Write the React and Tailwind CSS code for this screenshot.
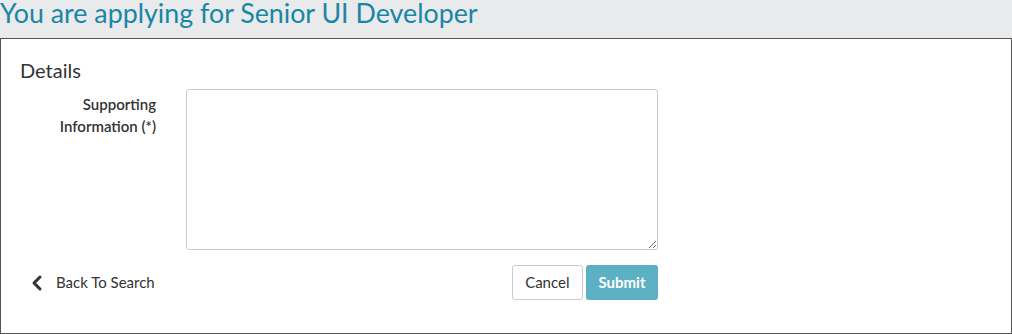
import { ChevronLeft } from 'lucide-react';

const App = () => {
    return (
        <div className="w-[1012px] h-[334px] bg-[#e9eaeb] font-['Lato','Liberation_Sans',sans-serif] text-[#333]">
            {/* Page title */}
            <div className="h-[38px]">
                <h1 className="text-[26.8px] leading-[26px] text-[#1a86a6]">You are applying for Senior UI Developer</h1>
            </div>

            {/* Form panel */}
            <div className="w-[1012px] h-[296px] bg-white border border-[#555] pt-[19px] px-[19px]">
                <h2 className="text-[20px] leading-[24px] text-[#333]">Details</h2>

                <div className="flex mt-[7px]">
                    <label className="w-[136px] text-right text-[15px] leading-[22px] font-semibold text-[#333] pt-[4px]">
                        Supporting<br />Information (*)
                    </label>
                    <textarea className="ml-[30px] w-[472px] h-[161px] border border-[#ccc] rounded-[3px] outline-none resize-y" />
                </div>

                <div className="flex items-center mt-[15px] w-[638px]">
                    <a href="#" className="flex items-center text-[15px] text-[#333] ml-[5px]">
                        <ChevronLeft className="w-[24px] h-[24px]" strokeWidth={3} />
                        <span className="ml-[7px]">Back To Search</span>
                    </a>
                    <div className="ml-auto flex gap-[3px]">
                        <button className="h-[35px] px-[12.5px] border border-[#ccc] rounded-[3px] bg-white text-[15px] text-[#333]">Cancel</button>
                        <button className="h-[35px] px-[12.5px] rounded-[3px] bg-[#5bb0c4] text-[15px] font-bold text-white">Submit</button>
                    </div>
                </div>
            </div>
        </div>
    );
};

export default App;
